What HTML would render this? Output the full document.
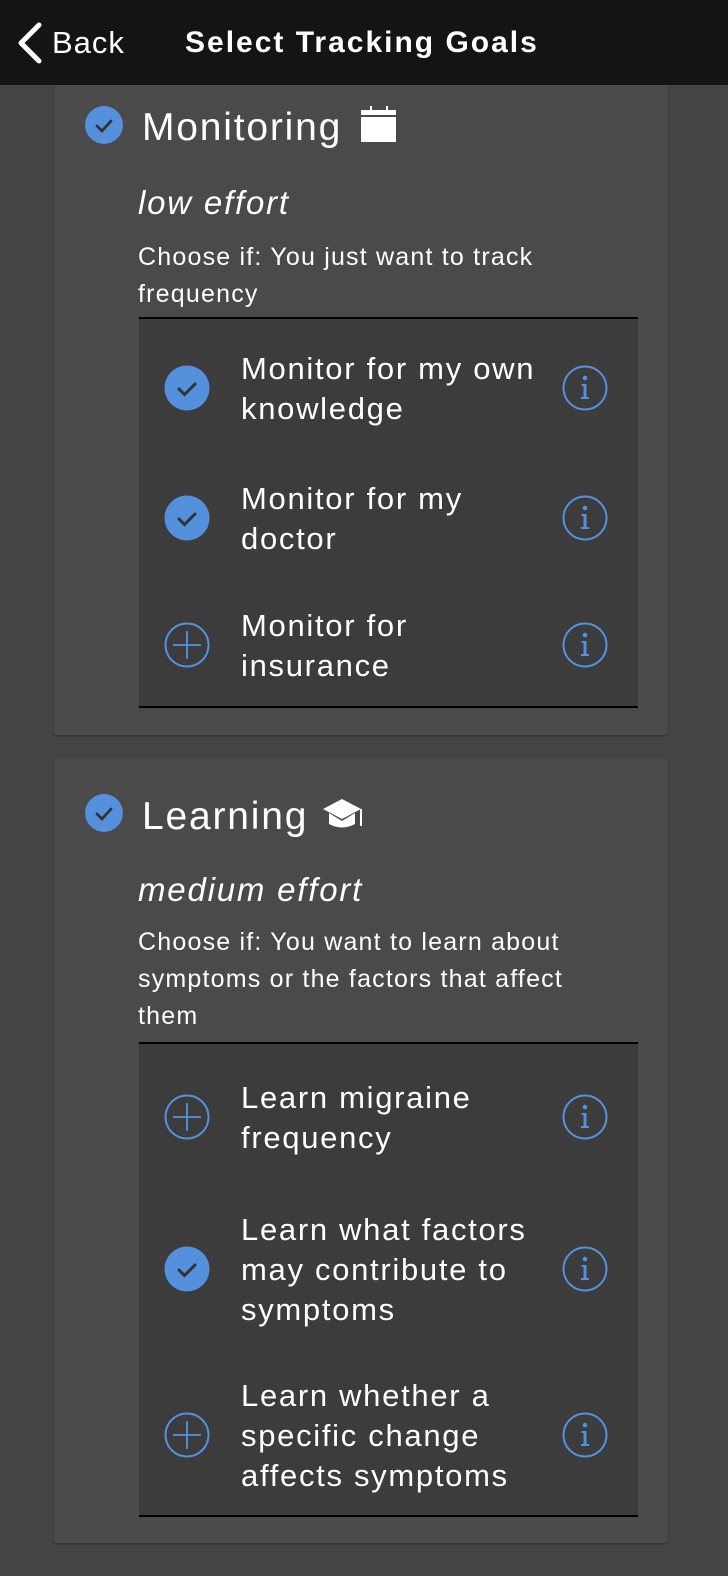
<!DOCTYPE html>
<html><head><meta charset="utf-8"><style>
*{margin:0;padding:0;box-sizing:border-box}
body{width:728px;height:1576px;background:#444444;font-family:"Liberation Sans",Arial,sans-serif;color:#fff;position:relative;overflow:hidden}
.nav{position:absolute;top:0;left:0;width:728px;height:85px;background:#141414;z-index:5}
.back{position:absolute;left:52px;top:25px;font-size:31px;letter-spacing:1px}
.title{position:absolute;left:185px;top:26px;font-size:30px;font-weight:bold;letter-spacing:2px}
.card{position:absolute;left:54px;width:614px;background:#4a4a4a;border-radius:3px;box-shadow:0 1px 2px rgba(0,0,0,.3)}
.hd{position:absolute;left:88px;font-size:39px;letter-spacing:1.8px}
.eff{position:absolute;left:138px;font-size:33px;font-style:italic;letter-spacing:1.8px}
.ch{position:absolute;left:138px;font-size:25px;line-height:37px;width:455px;letter-spacing:1.2px}
.list{position:absolute;left:139px;width:499px;background:#3c3c3c;border-top:2px solid #000;border-bottom:2px solid #000}
.row{position:relative;display:flex;align-items:center}
.row .t{position:absolute;left:102px;font-size:31px;line-height:40px;width:310px;letter-spacing:1.7px;padding-top:2px}
.ic{position:absolute;left:25px;top:50%;margin-top:-23px}
.inf{position:absolute;left:423px;top:50%;margin-top:-23px}
</style></head><body>
<div class="nav">
<svg style="position:absolute;left:14px;top:22px" width="30" height="42"><path d="M25 3 L7 21 L25 39" stroke="#fff" stroke-width="5" fill="none" stroke-linecap="round" stroke-linejoin="round"/></svg>
<div class="back">Back</div><div class="title">Select Tracking Goals</div></div>

<svg width="0" height="0" style="position:absolute"><defs>
<g id="chk"><circle cx="23" cy="23" r="22.5" fill="#5590dd"/><path d="M15 24 L20.5 29.5 L31 19" stroke="#333" stroke-width="3" fill="none" stroke-linecap="round"/></g>
<g id="plus"><circle cx="23" cy="23" r="21.5" fill="none" stroke="#5590dd" stroke-width="2"/><path d="M23 9V37M9 23H37" stroke="#5590dd" stroke-width="1.8"/></g>
<g id="info"><circle cx="23" cy="23" r="21.5" fill="none" stroke="#5590dd" stroke-width="2"/><circle cx="23" cy="13" r="2.3" fill="#5590dd"/><path d="M19.5 19H24.5V32H27V34H19V32H21.5V21H19.5Z" fill="#5590dd"/></g>
</defs></svg>

<div class="card" style="top:60px;height:675px"></div>
<svg style="position:absolute;left:85px;top:106px" width="38" height="38"><circle cx="19" cy="19" r="19" fill="#5590dd"/><path d="M12 20 L17 25 L26 15" stroke="#333" stroke-width="2.8" fill="none" stroke-linecap="round"/></svg>
<div class="hd" style="left:142px;top:106px">Monitoring</div>
<svg style="position:absolute;left:360px;top:106px" width="38" height="38"><rect x="1" y="4" width="35" height="32" fill="#fff"/><rect x="1" y="9" width="35" height="2" fill="#4a4a4a"/><rect x="10" y="0" width="2" height="8" fill="#fff"/><rect x="26" y="0" width="2" height="8" fill="#fff"/></svg>
<div class="eff" style="top:184px">low effort</div>
<div class="ch" style="top:239px">Choose if: You just want to track frequency</div>
<div class="list" style="top:317px;padding-top:4px">
<div class="row" style="height:130px"><svg class="ic" width="46" height="46"><use href="#chk"/></svg><div class="t">Monitor for my own knowledge</div><svg class="inf" width="46" height="46"><use href="#info"/></svg></div>
<div class="row" style="height:130px"><svg class="ic" width="46" height="46"><use href="#chk"/></svg><div class="t">Monitor for my doctor</div><svg class="inf" width="46" height="46"><use href="#info"/></svg></div>
<div class="row" style="height:123px"><svg class="ic" width="46" height="46"><use href="#plus"/></svg><div class="t">Monitor for insurance</div><svg class="inf" width="46" height="46"><use href="#info"/></svg></div>
</div>

<div class="card" style="top:758px;height:785px"></div>
<svg style="position:absolute;left:85px;top:794px" width="38" height="38"><circle cx="19" cy="19" r="19" fill="#5590dd"/><path d="M12 20 L17 25 L26 15" stroke="#333" stroke-width="2.8" fill="none" stroke-linecap="round"/></svg>
<div class="hd" style="left:142px;top:795px">Learning</div>
<svg style="position:absolute;left:322px;top:797px" width="46" height="36"><path d="M1 12 L20 2 L39 12 L20 22Z" fill="#fff"/><path d="M7 16 V27 Q20 34 33 27 V16 L20 24Z" fill="#fff"/><path d="M39 12 V29" stroke="#fff" stroke-width="2"/></svg>
<div class="eff" style="top:871px">medium effort</div>
<div class="ch" style="top:924px">Choose if: You want to learn about symptoms or the factors that affect them</div>
<div class="list" style="top:1042px;padding-top:6px">
<div class="row" style="height:134px"><svg class="ic" width="46" height="46"><use href="#plus"/></svg><div class="t">Learn migraine frequency</div><svg class="inf" width="46" height="46"><use href="#info"/></svg></div>
<div class="row" style="height:170px"><svg class="ic" width="46" height="46"><use href="#chk"/></svg><div class="t">Learn what factors may contribute to symptoms</div><svg class="inf" width="46" height="46"><use href="#info"/></svg></div>
<div class="row" style="height:161px"><svg class="ic" width="46" height="46"><use href="#plus"/></svg><div class="t">Learn whether a specific change affects symptoms</div><svg class="inf" width="46" height="46"><use href="#info"/></svg></div>
</div>
</body></html>
